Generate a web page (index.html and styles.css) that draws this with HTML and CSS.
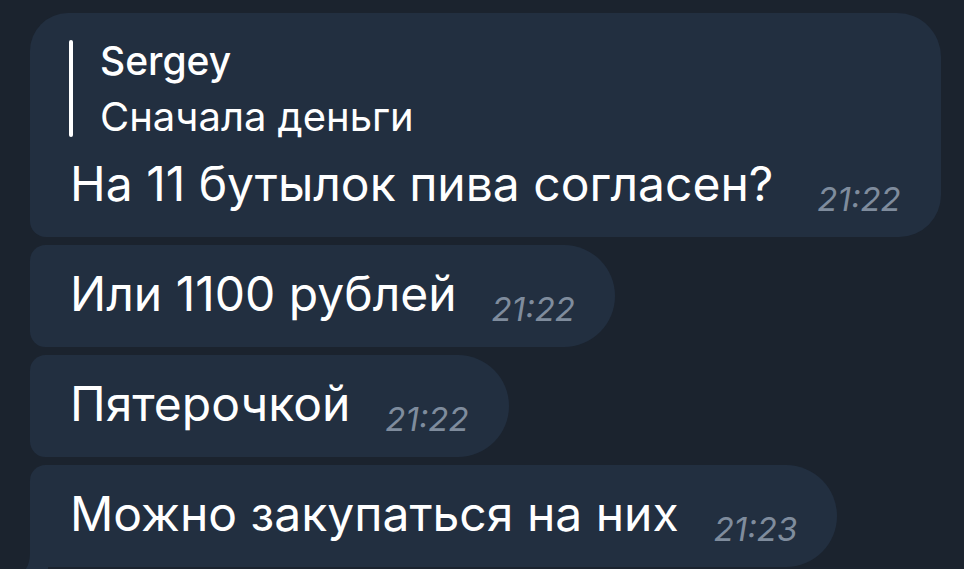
FILE: index.html
```html
<!DOCTYPE html>
<html lang="ru">
<head>
  <meta charset="UTF-8" />
  <title>Чат</title>
  <link rel="stylesheet" href="styles.css">
</head>
<body>
  <div class="chat">
    <div class="bubble bubble-first">
      <div class="reply">
        <div class="reply-bar"></div>
        <div class="reply-body">
          <div class="reply-name">Sergey</div>
          <div class="reply-text">Сначала деньги</div>
        </div>
      </div>
      <div class="line">На 11 бутылок пива согласен?<span class="time time-wide">21:22</span></div>
    </div>

    <div class="bubble">
      <div class="line">Или 1100 рублей<span class="time">21:22</span></div>
    </div>

    <div class="bubble">
      <div class="line">Пятерочкой<span class="time">21:22</span></div>
    </div>

    <div class="bubble bubble-last">
      <div class="line">Можно закупаться на них<span class="time">21:23</span></div>
      <!-- tail -->
      <svg class="tail" width="32" height="32" viewBox="0 0 32 32">
        <path d="M14 0 L14 8 Q14 26 0 32 L32 32 L32 0 Z" fill="#222f40"/>
      </svg>
    </div>
  </div>
</body>
</html>
```

FILE: styles.css
```css
body {
  margin: 0;
  padding: 0;
  background: #1b232e;
  font-family: 'Inter', 'Noto Sans', sans-serif;
  color: #ffffff;
  height: 569px;
  overflow: hidden;
}

.chat {
  display: flex;
  flex-direction: column;
  align-items: flex-start;
  gap: 8px;
  padding: 13px 0 0 30px;
}

.bubble {
  position: relative;
  background: #222f40;
  padding: 21px 40px 25px 40px;
  border-radius: 16px 52px 52px 16px;
}

.bubble-first {
  padding-top: 27px;
  border-radius: 38px 44px 42px 16px;
}

.reply {
  display: flex;
  margin-left: -1px;
  margin-bottom: 19px;
}

.reply-bar {
  width: 4px;
  border-radius: 2px;
  background: #ffffff;
}

.reply-body {
  padding-left: 27px;
}

.reply-name {
  font-size: 39px;
  font-weight: 500;
  line-height: 42px;
}

.reply-text {
  font-size: 40px;
  line-height: 40px;
  margin-top: 15px;
}

.line {
  font-size: 48px;
  line-height: 56px;
  white-space: nowrap;
}

.time {
  font-size: 33px;
  font-style: italic;
  line-height: 0;
  color: #7f8c9d;
  margin-left: 35px;
  vertical-align: -10px;
}

.time-wide {
  margin-left: 44px;
}

.tail {
  position: absolute;
  left: -14px;
  bottom: -10px;
}
```
